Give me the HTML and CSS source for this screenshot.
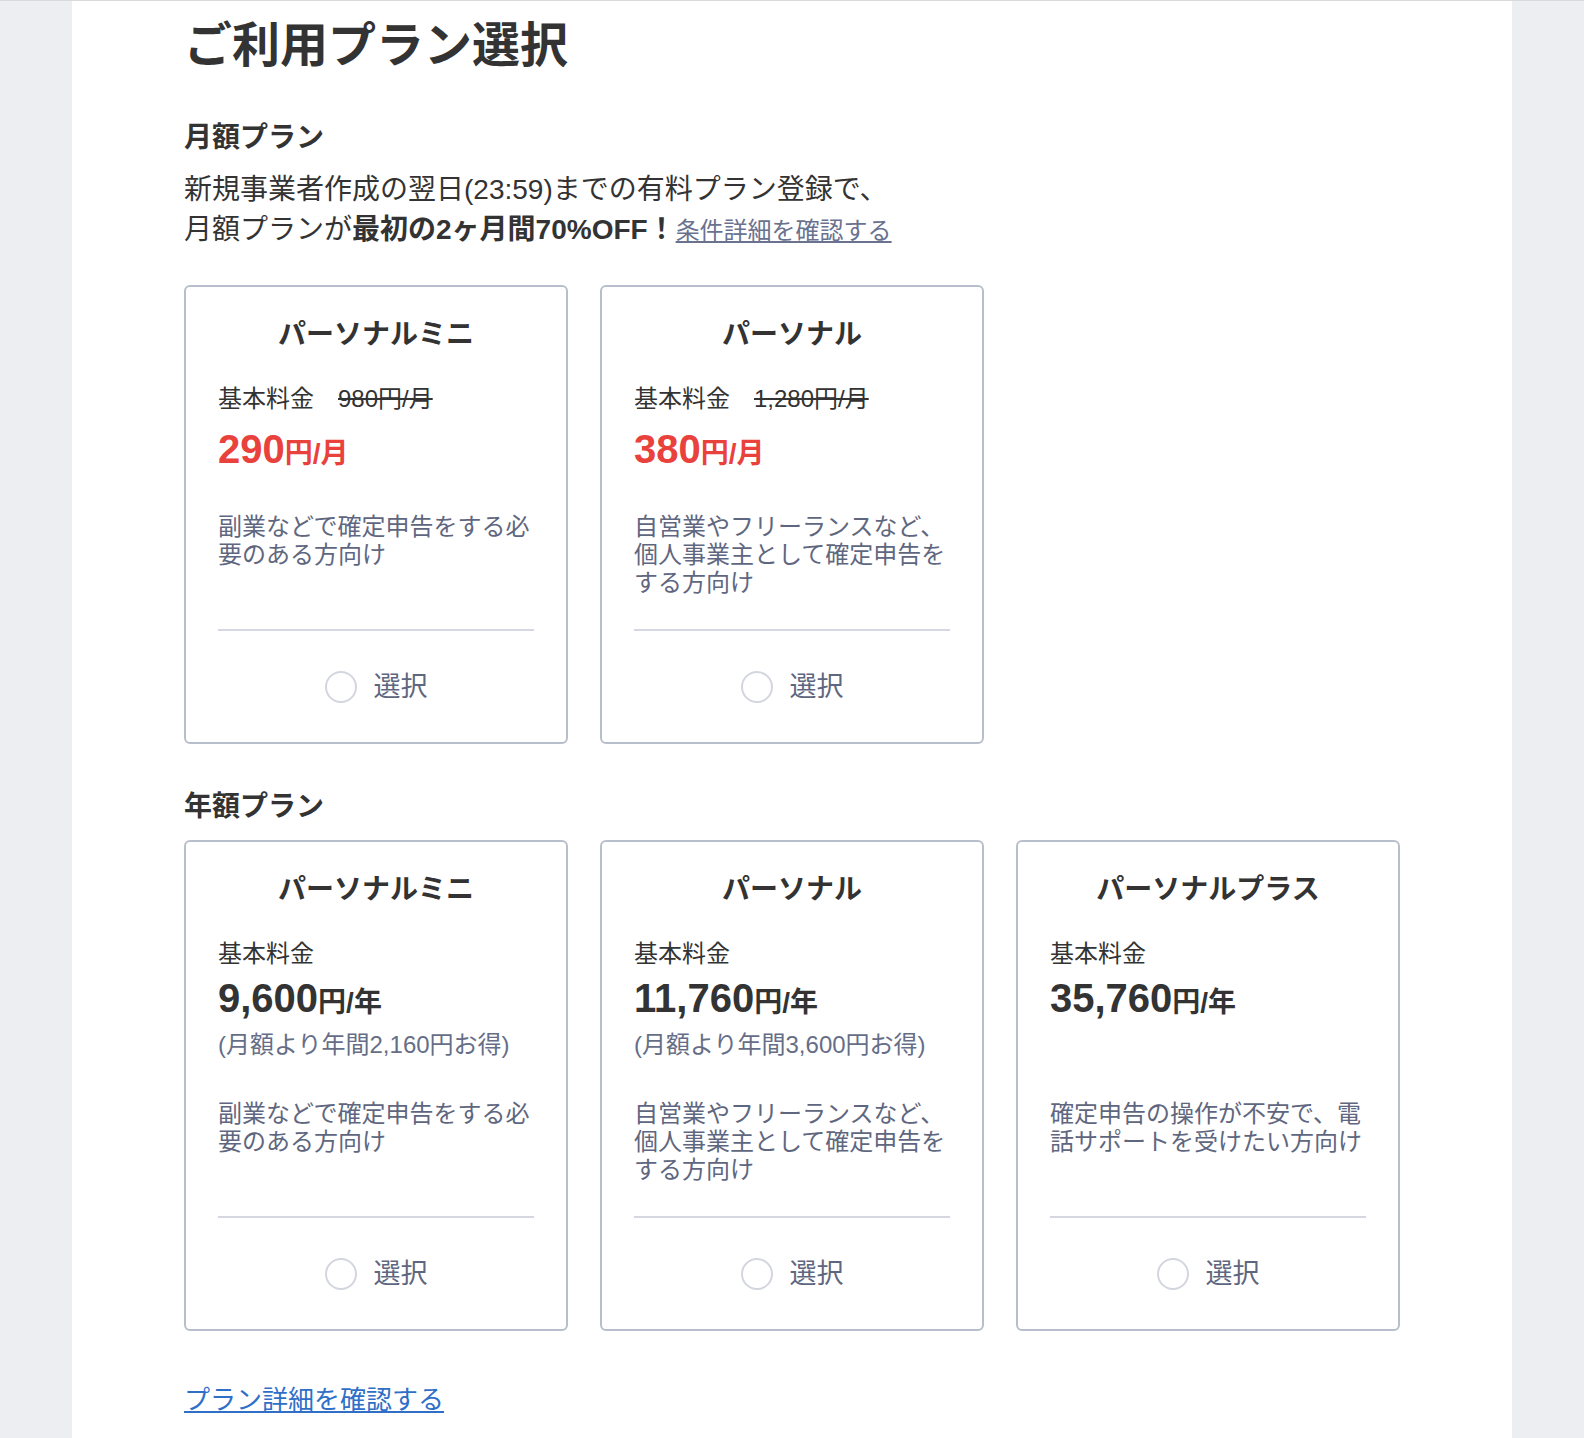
FILE: index.html
```html
<!DOCTYPE html>
<html lang="ja">
<head>
    <meta charset="UTF-8">
    <meta name="viewport" content="width=device-width, initial-scale=1.0">
    <title>ご利用プラン選択</title>
    <link rel="stylesheet" href="styles.css">
</head>
<body>

<div class="container">
    <h1>ご利用プラン選択</h1>

    <h2 class="section-title">月額プラン</h2>
    <p class="notice">
        新規事業者作成の翌日(23:59)までの有料プラン登録で、<br>
        月額プランが<strong>最初の2ヶ月間70%OFF！</strong><a href="#" class="notice-link">条件詳細を確認する</a>
    </p>

    <div class="plans monthly">
        <div class="plan">
            <h3>パーソナルミニ</h3>
            <div class="base">基本料金<s class="old-price">980円/月</s></div>
            <div class="price sale"><span class="amount">290</span><span class="unit">円/月</span></div>
            <p class="desc">副業などで確定申告をする必要のある方向け</p>
            <label class="select"><input type="radio" name="plan" value="mini-month">選択</label>
        </div>
        <div class="plan">
            <h3>パーソナル</h3>
            <div class="base">基本料金<s class="old-price">1,280円/月</s></div>
            <div class="price sale"><span class="amount">380</span><span class="unit">円/月</span></div>
            <p class="desc">自営業やフリーランスなど、個人事業主として確定申告をする方向け</p>
            <label class="select"><input type="radio" name="plan" value="personal-month">選択</label>
        </div>
    </div>

    <h2 class="section-title annual-title">年額プラン</h2>

    <div class="plans annual">
        <div class="plan">
            <h3>パーソナルミニ</h3>
            <div class="base">基本料金</div>
            <div class="price"><span class="amount">9,600</span><span class="unit">円/年</span></div>
            <div class="saving">(月額より年間2,160円お得)</div>
            <p class="desc">副業などで確定申告をする必要のある方向け</p>
            <label class="select"><input type="radio" name="plan" value="mini-year">選択</label>
        </div>
        <div class="plan">
            <h3>パーソナル</h3>
            <div class="base">基本料金</div>
            <div class="price"><span class="amount">11,760</span><span class="unit">円/年</span></div>
            <div class="saving">(月額より年間3,600円お得)</div>
            <p class="desc">自営業やフリーランスなど、個人事業主として確定申告をする方向け</p>
            <label class="select"><input type="radio" name="plan" value="personal-year">選択</label>
        </div>
        <div class="plan">
            <h3>パーソナルプラス</h3>
            <div class="base">基本料金</div>
            <div class="price"><span class="amount">35,760</span><span class="unit">円/年</span></div>
            <div class="saving"></div>
            <p class="desc">確定申告の操作が不安で、電話サポートを受けたい方向け</p>
            <label class="select"><input type="radio" name="plan" value="plus-year">選択</label>
        </div>
    </div>

    <a href="#" class="more-link">プラン詳細を確認する</a>
</div>

</body>
</html>
```

FILE: styles.css
```css
body {
    margin: 0;
    font-family: "Liberation Sans", "Noto Sans CJK JP", sans-serif;
    background-color: #eceef2;
    border-top: 1px solid #d9d9d9;
    color: #333;
}
.container {
    box-sizing: border-box;
    width: 1440px;
    min-height: calc(100vh - 1px);
    margin: 0 auto;
    padding: 13px 112px 20px;
    background: #fff;
}
h1 {
    margin: 0;
    font-size: 48px;
    line-height: 64px;
    font-weight: bold;
}
.section-title {
    margin: 40px 0 0;
    font-size: 28px;
    line-height: 40px;
    font-weight: bold;
}
.annual-title {
    margin-top: 43px;
}
.notice {
    margin: 12px 0 34px;
    font-size: 28px;
    line-height: 40px;
}
.notice strong {
    font-weight: bold;
}
.notice-link {
    font-size: 24px;
    color: #6a7290;
    text-decoration: underline;
}
.plans {
    display: grid;
    grid-template-columns: repeat(3, 1fr);
    gap: 32px;
    margin-top: 13px;
}
.plan {
    display: flex;
    flex-direction: column;
    padding: 28px 32px 35px;
    border: 2px solid #b9becd;
    border-radius: 6px;
}
.plan h3 {
    margin: 0;
    font-size: 28px;
    line-height: 40px;
    text-align: center;
    font-weight: bold;
}
.base {
    margin-top: 26px;
    font-size: 24px;
    line-height: 36px;
}
.old-price {
    margin-left: 24px;
}
.price {
    margin-top: 8px;
    line-height: 48px;
    font-weight: bold;
}
.annual .price {
    margin-top: 2px;
}
.price .amount {
    font-size: 40px;
}
.price .unit {
    font-size: 28px;
}
.price.sale {
    color: #e9413b;
}
.saving {
    min-height: 28px;
    margin: 0 0 10px;
    font-size: 24px;
    line-height: 28px;
    color: #666e87;
}
.desc {
    flex: 1;
    margin: 31px 0 32px;
    font-size: 24px;
    line-height: 28px;
    color: #5f6780;
}
.select {
    display: flex;
    justify-content: center;
    align-items: center;
    gap: 17px;
    padding-top: 36px;
    border-top: 2px solid #d5d8e0;
    font-size: 27px;
    line-height: 40px;
    color: #5f6780;
    cursor: pointer;
}
.select input {
    appearance: none;
    width: 32px;
    height: 32px;
    margin: 0;
    border: 2px solid #d3d6de;
    border-radius: 50%;
    background: #fff;
}
.select input:checked {
    border: 10px solid #2f6fc7;
}
.more-link {
    display: inline-block;
    margin-top: 49px;
    font-size: 26px;
    line-height: 40px;
    color: #2f6fc7;
    text-decoration: underline;
}
```
